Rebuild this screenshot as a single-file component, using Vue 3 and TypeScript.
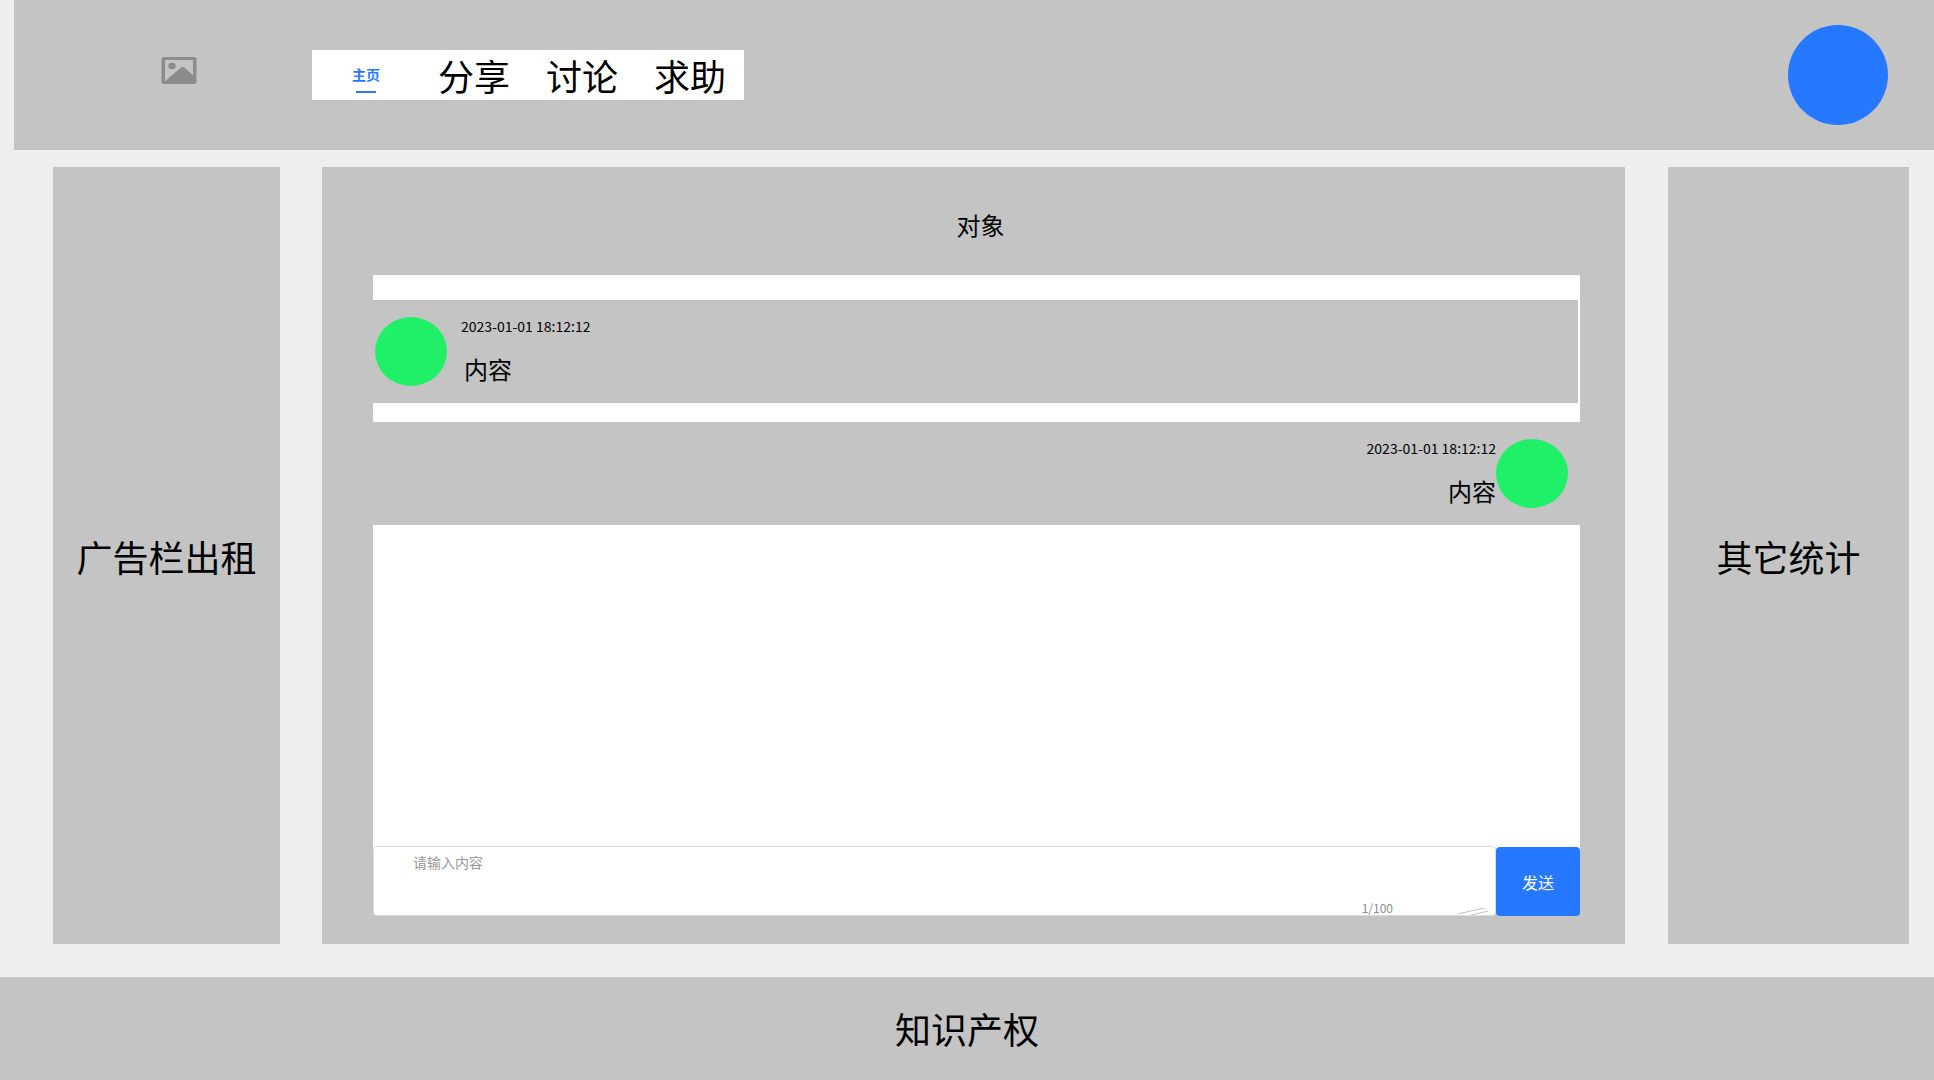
<script setup lang="ts">
import { ref } from 'vue'

interface Message {
  id: number
  time: string
  text: string
  mine: boolean
}

const tabs: string[] = ['主页', '分享', '讨论', '求助']
const active = ref('主页')
const draft = ref('')

const messages = ref<Message[]>([
  { id: 1, time: '2023-01-01 18:12:12', text: '内容', mine: false },
  { id: 2, time: '2023-01-01 18:12:12', text: '内容', mine: true },
])
</script>

<template>
  <div class="page">
    <header class="header">
      <svg class="logo" viewBox="0 0 36 28" width="36" height="28" aria-hidden="true">
        <path
          fill="#8c8c8c"
          fill-rule="evenodd"
          d="M2.500 0h31a2 2 0 0 1 2 2v23a2 2 0 0 1-2 2h-31a2 2 0 0 1-2-2V2a2 2 0 0 1 2-2zM4 3v21.300L20.200 10.200q1.300-1 2.600 0L32 18V3z"
        />
        <ellipse cx="11" cy="9" rx="3.700" ry="3.200" fill="#8c8c8c" />
      </svg>
      <nav class="nav">
        <a
          v-for="tab in tabs"
          :key="tab"
          href="#"
          class="tab"
          :class="{ active: tab === active }"
          @click.prevent="active = tab"
        >{{ tab }}</a>
      </nav>
      <div class="user"></div>
    </header>

    <div class="body">
      <aside class="side ads">广告栏出租</aside>

      <main class="chat">
        <h1 class="title">对象</h1>
        <div class="log">
          <article v-for="m in messages" :key="m.id" class="message" :class="{ mine: m.mine }">
            <div class="avatar"></div>
            <div class="bubble">
              <time class="time">{{ m.time }}</time>
              <p class="text">{{ m.text }}</p>
            </div>
          </article>
        </div>
        <form class="composer" @submit.prevent>
          <div class="field">
            <textarea v-model="draft" class="input" placeholder="请输入内容" aria-label="请输入内容" maxlength="100"></textarea>
            <span class="count">1/100</span>
            <svg class="grip" viewBox="0 0 34 8" width="34" height="8" aria-hidden="true">
              <path d="M1 7 28.500 1M15 8l17.500-4" fill="none" stroke="#c4c4c4" />
            </svg>
          </div>
          <button class="send" type="submit">发送</button>
        </form>
      </main>

      <aside class="side stats">其它统计</aside>
    </div>

    <footer class="footer">知识产权</footer>
  </div>
</template>

<style>
body {
  margin: 0;
  background: #eeeeee;
}
</style>

<style scoped>
.page {
  display: flex;
  flex-direction: column;
  min-height: 100vh;
  box-sizing: border-box;
  color: #000;
  font-family: 'Noto Sans CJK SC', sans-serif;
}

.header {
  display: flex;
  align-items: center;
  height: 150px;
  margin-left: 14px;
  padding: 0 46px 0 147px;
  box-sizing: border-box;
  background: #c4c4c4;
}

.logo {
  margin: 0 115px 8px 0;
}

.nav {
  display: flex;
  height: 50px;
  background: #fff;
}

.tab {
  display: flex;
  align-items: center;
  justify-content: center;
  position: relative;
  box-sizing: border-box;
  width: 108px;
  color: #000;
  font-size: 36px;
  line-height: 52px;
  text-decoration: none;
}

.tab.active {
  padding-bottom: 2px;
  color: #2678ff;
  font-size: 14px;
  font-weight: 700;
}

.tab.active::after {
  content: '';
  position: absolute;
  bottom: 7px;
  left: 44px;
  width: 20px;
  height: 2px;
  background: #2678ff;
}

.user {
  width: 100px;
  height: 100px;
  margin-left: auto;
  border-radius: 50%;
  background: #2678ff;
}

.body {
  display: flex;
  flex: 1;
  padding: 17px 25px 33px 53px;
}

.side {
  display: flex;
  flex: none;
  align-items: center;
  justify-content: center;
  background: #c4c4c4;
  font-size: 36px;
  line-height: 52px;
}

.ads {
  width: 227px;
}

.stats {
  width: 241px;
}

.chat {
  display: flex;
  flex: 1;
  flex-direction: column;
  margin: 0 43px 0 42px;
  padding: 40px 45px 28px 51px;
  background: #c4c4c4;
}

.title {
  margin: 0 0 32px;
  padding-left: 8px;
  font-size: 24px;
  font-weight: 400;
  line-height: 36px;
  text-align: center;
}

.log {
  display: flex;
  flex: 1;
  flex-direction: column;
  gap: 19px;
  padding: 25px 0;
  background: #fff;
}

.message {
  display: flex;
  gap: 14px;
  margin-right: 2px;
  padding: 17px 0 17px 2px;
  background: #c4c4c4;
}

.message.mine {
  flex-direction: row-reverse;
  gap: 0;
  margin-right: 0;
  padding-right: 12px;
  text-align: right;
}

.avatar {
  width: 72px;
  height: 69px;
  border-radius: 50%;
  background: #20f068;
}

.time {
  display: block;
  font-size: 14px;
  line-height: 18px;
}

.text {
  margin: 17px 0 0 3px;
  font-size: 24px;
  line-height: 34px;
}

.composer {
  display: flex;
  height: 69px;
  background: linear-gradient(#fff 8px, #c4c4c4 8px);
}

.field {
  position: relative;
  flex: 1;
  margin-top: -1px;
}

.input {
  display: block;
  width: 100%;
  height: 100%;
  box-sizing: border-box;
  padding: 5px 39px;
  border: 1px solid #dcdcdc;
  border-radius: 4px;
  outline: none;
  background: #fff;
  color: #000;
  font-family: inherit;
  font-size: 14px;
  line-height: 20px;
  resize: none;
}

.input::placeholder {
  color: #999;
  opacity: 1;
}

.count {
  position: absolute;
  right: 103px;
  bottom: 0;
  color: #8c8c8c;
  font-size: 12px;
  line-height: 16px;
}

.grip {
  position: absolute;
  right: 6px;
  bottom: 1px;
}

.send {
  width: 84px;
  padding: 0;
  border: 0;
  border-radius: 4px;
  background: #2678ff;
  color: #fff;
  font-family: inherit;
  font-size: 16px;
  line-height: 24px;
}

.footer {
  height: 103px;
  background: #c4c4c4;
  font-size: 36px;
  line-height: 102px;
  text-align: center;
}
</style>
